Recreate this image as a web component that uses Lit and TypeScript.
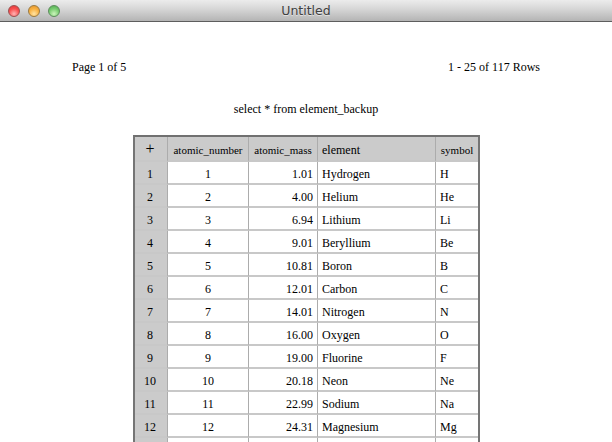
import { LitElement, html, css } from "lit";
import { customElement } from "lit/decorators.js";

const rows: [string, string, string, string][] = [
  ["1", "1.01", "Hydrogen", "H"],
  ["2", "4.00", "Helium", "He"],
  ["3", "6.94", "Lithium", "Li"],
  ["4", "9.01", "Beryllium", "Be"],
  ["5", "10.81", "Boron", "B"],
  ["6", "12.01", "Carbon", "C"],
  ["7", "14.01", "Nitrogen", "N"],
  ["8", "16.00", "Oxygen", "O"],
  ["9", "19.00", "Fluorine", "F"],
  ["10", "20.18", "Neon", "Ne"],
  ["11", "22.99", "Sodium", "Na"],
  ["12", "24.31", "Magnesium", "Mg"],
  ["", "", "", ""],
];

@customElement("app-root")
export class AppRoot extends LitElement {
  static styles = css`
    :host {
      display: block;
      width: 612px;
      height: 442px;
      overflow: hidden;
      background: #fff;
      font-family: "Liberation Serif", serif;
      font-size: 12px;
      color: #000;
    }
    .bar {
      height: 21px;
      box-sizing: content-box;
      border-bottom: 1px solid #5e5e5e;
      background: linear-gradient(#ececec, #d8d8d8 40%, #b4b4b4);
      display: flex;
      align-items: center;
      justify-content: center;
      position: relative;
    }
    .title {
      font-family: "DejaVu Sans", sans-serif;
      font-size: 12.5px;
      color: #404040;
      text-shadow: 0 1px 0 rgba(255, 255, 255, 0.5);
    }
    .lights {
      position: absolute;
      left: 8px;
      top: 5px;
      display: flex;
      gap: 8px;
    }
    .light {
      width: 12px;
      height: 12px;
      border-radius: 50%;
      box-sizing: border-box;
      border: 1px solid;
    }
    .red {
      background: radial-gradient(circle at 50% 78%, #ffb4b4, #f84f4f 55%, #e03434);
      border-color: #9a5050;
    }
    .yellow {
      background: radial-gradient(circle at 50% 78%, #ffe4a4, #f8b040 55%, #e2902a);
      border-color: #9a7a40;
    }
    .green {
      background: radial-gradient(circle at 50% 78%, #ccf4bc, #78cc70 55%, #4ca84c);
      border-color: #5c8c5c;
    }
    .pager {
      display: flex;
      justify-content: space-between;
      padding: 38px 72px 0;
      line-height: 14px;
    }
    .query {
      text-align: center;
      margin-top: 28px;
      line-height: 14px;
    }
    table {
      margin: 19px 0 0 133px;
      border-collapse: separate;
      border-spacing: 0;
      table-layout: fixed;
      width: 347px;
      border-top: 2px solid #707070;
      border-left: 2px solid #757575;
      border-right: 2px solid #757575;
    }
    th,
    td {
      box-sizing: border-box;
      height: 23px;
      padding: 2px 4px 0;
      font-weight: 400;
      border-right: 1px solid #acacac;
      border-bottom: 2px solid #c8c8c8;
      line-height: 14px;
      white-space: nowrap;
      overflow: hidden;
    }
    tr > :last-child {
      border-right: none;
    }
    th {
      background: #cbcbcb;
      height: 25px;
      font-size: 11px;
      text-align: center;
    }
    th.l {
      text-align: left;
      font-size: 12px;
    }
    th.plus {
      font-size: 16px;
      padding: 0 5px 0 3px;
    }
    td.id {
      background: #cbcbcb;
      text-align: center;
      padding-right: 5px;
      padding-left: 3px;
    }
    td.c {
      text-align: center;
    }
    td.r {
      text-align: right;
    }
    td.l {
      text-align: left;
    }
    .w1 {
      width: 33px;
    }
    .w2 {
      width: 81px;
    }
    .w3 {
      width: 69px;
    }
    .w4 {
      width: 118px;
    }
    .w5 {
      width: 42px;
    }
  `;

  render() {
    return html`
      <div class="bar">
        <div class="lights">
          <span class="light red"></span>
          <span class="light yellow"></span>
          <span class="light green"></span>
        </div>
        <span class="title">Untitled</span>
      </div>
      <div class="pager"><span>Page 1 of 5</span><span>1 - 25 of 117 Rows</span></div>
      <div class="query">select * from element_backup</div>
      <table>
        <colgroup>
          <col class="w1" />
          <col class="w2" />
          <col class="w3" />
          <col class="w4" />
          <col class="w5" />
        </colgroup>
        <thead>
          <tr>
            <th class="plus">+</th>
            <th>atomic_number</th>
            <th>atomic_mass</th>
            <th class="l">element</th>
            <th>symbol</th>
          </tr>
        </thead>
        <tbody>
          ${rows.map(
            ([n, m, e, s]) => html`<tr>
              <td class="id">${n}</td>
              <td class="c">${n}</td>
              <td class="r">${m}</td>
              <td class="l">${e}</td>
              <td class="l">${s}</td>
            </tr>`
          )}
        </tbody>
      </table>
    `;
  }
}
